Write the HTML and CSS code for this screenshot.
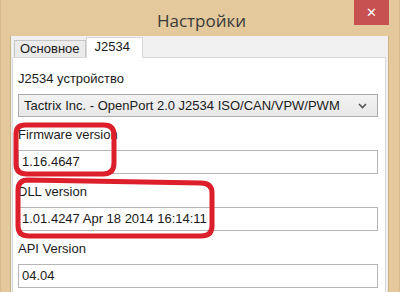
FILE: index.html
```html
<!DOCTYPE html>
<html lang="ru">
<head>
  <meta charset="UTF-8">
  <meta name="viewport" content="width=device-width, initial-scale=1.0">
  <title>Настройки</title>
  <link rel="stylesheet" href="styles.css">
</head>
<body>
  <div class="window">
    <div class="titlebar">
      <span class="title">Настройки</span>
      <button class="close">✕</button>
    </div>

    <div class="client">
      <div class="tabs">
        <div class="tab">Основное</div>
        <div class="tab active">J2534</div>
      </div>

      <div class="panel">
        <div class="group">
          <label>J2534 устройство</label>
          <div class="combo">
            <span>Tactrix Inc. - OpenPort 2.0 J2534 ISO/CAN/VPW/PWM</span>
            <svg class="chevron" width="9" height="6" viewBox="0 0 9 6">
              <path d="M1 1 L4.5 4.5 L8 1" fill="none" stroke="#555" stroke-width="1.6"/>
            </svg>
          </div>
        </div>

        <div class="group">
          <label>Firmware version</label>
          <div class="textbox">1.16.4647</div>
        </div>

        <div class="group">
          <label>DLL version</label>
          <div class="textbox">1.01.4247 Apr 18 2014 16:14:11</div>
        </div>

        <div class="group">
          <label>API Version</label>
          <div class="textbox">04.04</div>
        </div>
      </div>
    </div>

    <!-- пометки красным поверх формы -->
    <svg class="marks" width="400" height="292" viewBox="0 0 400 292">
      <path d="M24 125 Q15 125 15 134 L15 164 Q15 174 26 174 L102 174 Q113 174 113 163 L113 135 Q113 125 103 125 Z"
            fill="none" stroke="#dc1f2b" stroke-width="5"/>
      <path d="M27 180 Q17 180 17 190 L17 226 Q17 236 28 236 L200 236 Q211 236 211 226 L211 193 Q211 183 200 183 Z"
            fill="none" stroke="#dc1f2b" stroke-width="5"/>
    </svg>
  </div>
</body>
</html>
```

FILE: styles.css
```css
:root {
  --frame-color: #e3c99b;
  --client-color: #f0f0f0;
  --border-color: #adadad;
  --text-color: #1a1a1a;
}

* {
  margin: 0;
  padding: 0;
  box-sizing: border-box;
}

body {
  font-family: 'Liberation Sans', Arial, sans-serif;
  font-size: 13px;
  color: var(--text-color);
  background-color: var(--frame-color);
}

.window {
  position: relative;
  width: 400px;
  height: 292px;
  background-color: var(--frame-color);
  border-left: 1px solid #d6ba8a;
  border-right: 1px solid #d6ba8a;
  display: flex;
  flex-direction: column;
  padding: 0 10px 0 9px;
  overflow: hidden;
}

.titlebar {
  height: 36px;
  flex-shrink: 0;
  display: flex;
  align-items: center;
  justify-content: center;
}

.title {
  font-family: 'Open Sans', 'Noto Sans', sans-serif;
  font-size: 17px;
  color: #3a3a3a;
  margin-left: 4px;
  margin-top: 4px;
}

.close {
  position: absolute;
  top: 0;
  right: 10px;
  width: 35px;
  height: 25px;
  border: none;
  background-color: #c75050;
  color: white;
  font-size: 13px;
  font-weight: bold;
  font-family: 'DejaVu Sans', sans-serif;
}

.client {
  flex: 1;
  background-color: var(--client-color);
  border-left: 1px solid #c9b185;
  border-right: 1px solid #c9b185;
  padding: 1px 2px 0 1px;
  display: flex;
  flex-direction: column;
}

.tabs {
  display: flex;
  align-items: flex-end;
  height: 20px;
  padding-left: 2px;
  position: relative;
  z-index: 1;
}

.tab {
  height: 17px;
  padding: 0 5px;
  line-height: 16px;
  background-color: #ebebeb;
  border: 1px solid #c6c6c6;
  border-bottom: none;
}

.tab.active {
  height: 21px;
  padding: 0 12px 0 8px;
  line-height: 17px;
  background-color: white;
  border-color: #d9d9d9;
  margin-bottom: -1px;
}

.panel {
  flex: 1;
  background-color: white;
  border: 1px solid #d9d9d9;
  border-bottom: none;
  padding: 13px 7px 0 5px;
  display: flex;
  flex-direction: column;
  gap: 10px;
}

.group label {
  display: block;
  line-height: 16px;
  margin-bottom: 7px;
}

.combo {
  height: 23px;
  border: 1px solid #acacac;
  background: linear-gradient(#f2f2f2, #e8e8e8);
  display: flex;
  align-items: center;
  justify-content: space-between;
  padding: 0 10px 0 5px;
  margin-top: 2px;
}

.textbox {
  height: 24px;
  border: 1px solid #b5b5b5;
  background-color: white;
  line-height: 22px;
  padding-left: 3px;
}

.marks {
  position: absolute;
  top: 0;
  left: 0;
  pointer-events: none;
}
```
